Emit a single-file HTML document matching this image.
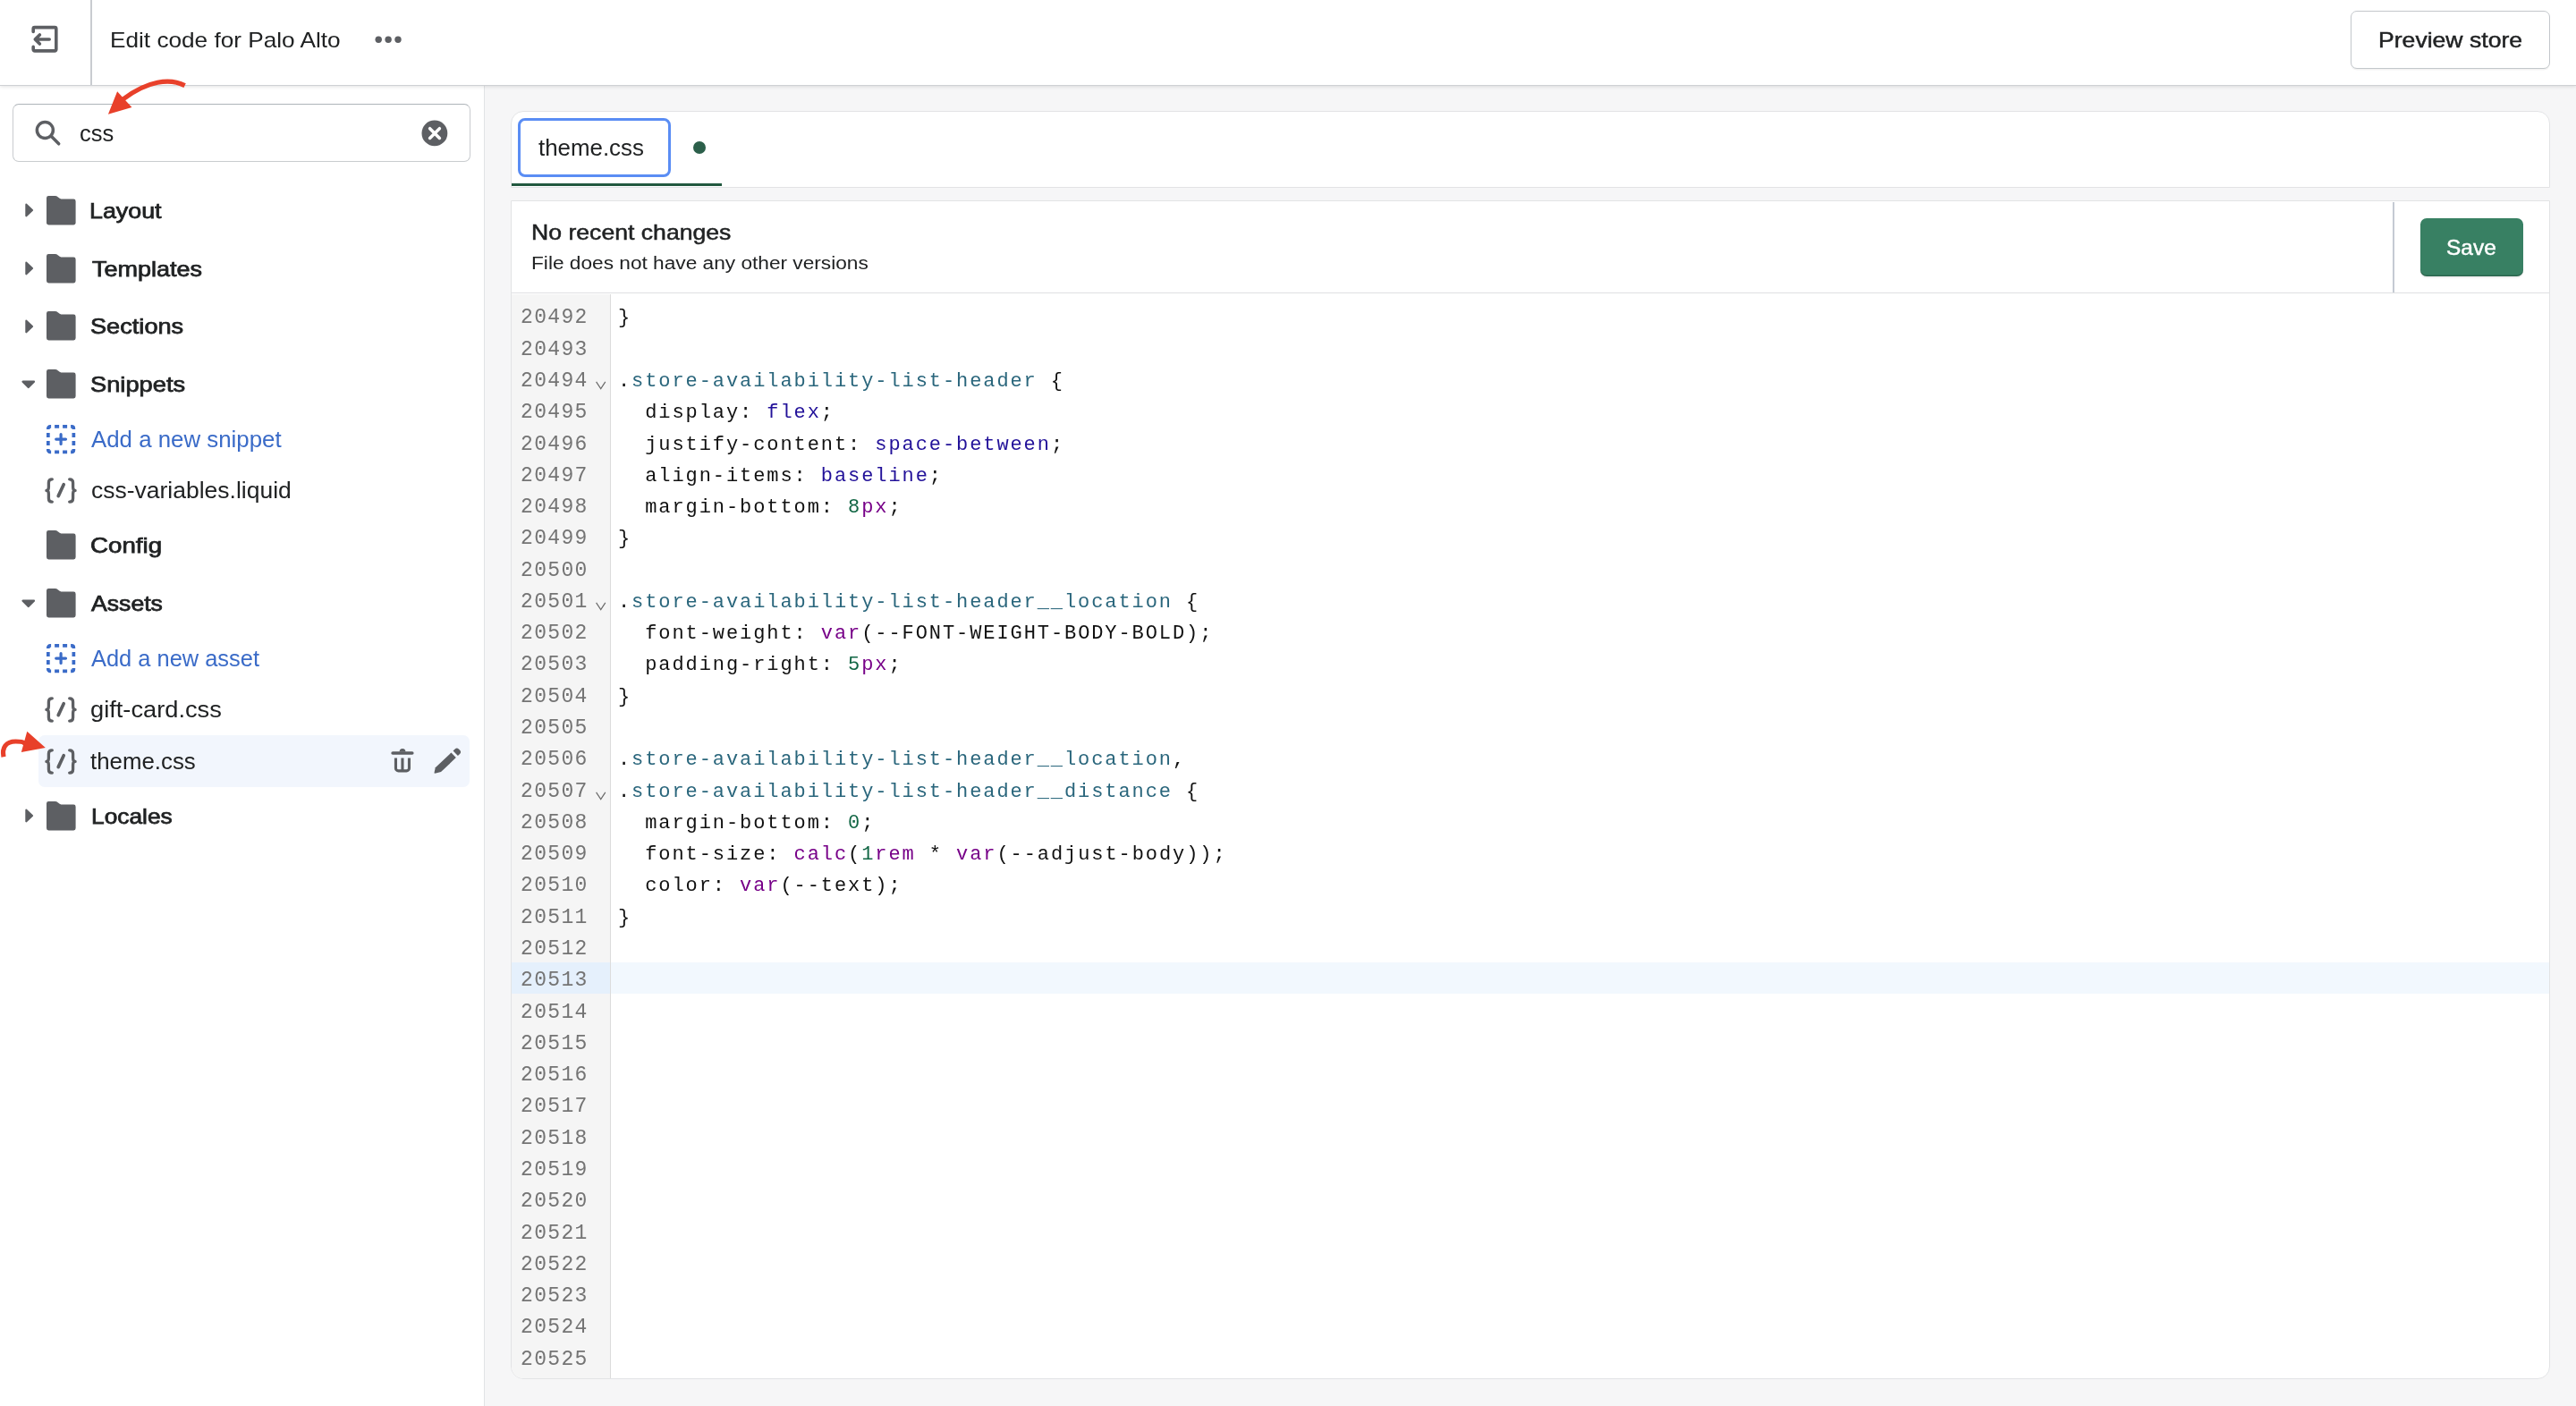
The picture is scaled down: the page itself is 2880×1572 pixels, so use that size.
<!DOCTYPE html>
<html lang="en"><head><meta charset="utf-8"><title>Edit code for Palo Alto</title>
<style>
*{box-sizing:border-box;margin:0;padding:0}
html,body{width:2880px;height:1572px;overflow:hidden;background:#f6f6f7}
body{position:relative;font-family:"Liberation Sans",Arial,sans-serif;color:#202223}
.t{position:absolute;white-space:pre;display:block;transform-origin:0 0}
.abs{position:absolute}
svg{position:absolute;overflow:visible}
#topbar{position:absolute;left:0;top:0;width:2880px;height:96px;background:#fff;border-bottom:1px solid #cfd1d4;box-shadow:0 1px 4px rgba(0,0,0,.12);z-index:5}
#sidebar{position:absolute;left:0;top:95px;width:542px;height:1477px;background:#fff;border-right:1px solid #e1e3e5}
.card{position:absolute;background:#fff;border:1px solid #e2e3e5}
.semi{-webkit-text-stroke:0.75px currentColor}
.med{-webkit-text-stroke:0.45px currentColor}
.semi2{-webkit-text-stroke:0.5px currentColor}
#code{position:absolute;left:690.96px;top:338.4px;font-family:"Liberation Mono","DejaVu Sans Mono",monospace;font-size:22px;letter-spacing:1.92px;color:#111;white-space:pre}
#code div,#nums div{height:35.295px;line-height:35.295px}
#nums{position:absolute;left:582.1px;top:338.4px;font-family:"Liberation Mono","DejaVu Sans Mono",monospace;font-size:23px;letter-spacing:1.32px;color:#747474;white-space:pre}
.q{color:#2a667c}.a{color:#221199}.n{color:#116644}.k{color:#770088}
#w{position:absolute;left:0;top:0;width:2880px;height:1572px;will-change:transform}
</style></head><body><div id="w">

<header id="topbar">
<svg style="left:0;top:0" width="110" height="95" viewBox="0 0 110 95" fill="none" stroke="#5d5f63" stroke-width="3.6" stroke-linecap="round" stroke-linejoin="round">
<path d="M37.2 35.4V32.2a1.6 1.6 0 0 1 1.6-1.6H61.2a1.6 1.6 0 0 1 1.6 1.6V55.3a1.6 1.6 0 0 1-1.6 1.6H38.8a1.6 1.6 0 0 1-1.6-1.6V52.4"/>
<path d="M55.2 44H39.6M44.4 38.9 39.3 44 44.4 49.1"/>
</svg>
<div class="abs" style="left:101px;top:0;width:2px;height:95px;background:#c9ccd0"></div>
<span class="t" style="left:122.81px;top:33px;font-size:23.8px;line-height:23.8px;color:#202223;transform:scaleX(1.1001)">Edit code for Palo Alto</span>
<svg style="left:410px;top:30px" width="50" height="30"><g fill="#5d5f63"><circle cx="13.2" cy="14.25" r="3.7"/><circle cx="24.1" cy="14.25" r="3.7"/><circle cx="35" cy="14.25" r="3.7"/></g></svg>
<div class="abs" style="left:2628px;top:12px;width:223px;height:64.5px;border:1.5px solid #c3c7cb;border-radius:7px;background:#fff;box-shadow:0 1.5px 0 rgba(0,0,0,.05)"></div>
<span class="t med" style="left:2658.65px;top:33px;font-size:23.8px;line-height:23.8px;color:#202223;transform:scaleX(1.1173)">Preview store</span>
</header>
<div id="sidebar"></div>
<nav aria-label="Theme files">
<div class="abs" style="left:14px;top:116px;width:512px;height:64.7px;border:1.5px solid #c9cccf;border-top-color:#aeb4b9;border-radius:7px;background:#fff"></div>
<svg style="left:30px;top:125px" width="50" height="50" fill="none" stroke="#5d5f63" stroke-width="3.5" stroke-linecap="round"><circle cx="20.35" cy="20.5" r="9"/><path d="M27 27.1 35.7 35.8"/></svg>
<span class="t" style="left:88.86px;top:137px;font-size:25px;line-height:25px;color:#202223;transform:scaleX(1.0198)">css</span>
<svg style="left:466px;top:129px" width="40" height="40"><circle cx="19.9" cy="19.9" r="14.4" fill="#5d5f63"/><path d="M14.6 14.7 25.4 25.5M25.4 14.7 14.6 25.5" stroke="#fff" stroke-width="3.5" stroke-linecap="round"/></svg>
<svg style="left:27px;top:226.00px" width="12" height="18"><path d="M2.4 2.7 9 9 2.4 15.3Z" fill="#5d5f63" stroke="#5d5f63" stroke-width="2.2" stroke-linejoin="round"/></svg>
<svg style="left:51.7px;top:218.65px" width="33" height="33"><path d="M2.3 0H10C12.6 0 14 3.6 17.6 3.6H30.3A2.3 2.3 0 0 1 32.6 5.9V30.1A2.3 2.3 0 0 1 30.3 32.4H2.3A2.3 2.3 0 0 1 0 30.1V2.3A2.3 2.3 0 0 1 2.3 0Z" fill="#5d5f63"/></svg>
<span class="t semi" style="left:100.37px;top:224px;font-size:23.8px;line-height:23.8px;color:#202223;transform:scaleX(1.1271)">Layout</span>
<svg style="left:27px;top:291.00px" width="12" height="18"><path d="M2.4 2.7 9 9 2.4 15.3Z" fill="#5d5f63" stroke="#5d5f63" stroke-width="2.2" stroke-linejoin="round"/></svg>
<svg style="left:51.7px;top:283.65px" width="33" height="33"><path d="M2.3 0H10C12.6 0 14 3.6 17.6 3.6H30.3A2.3 2.3 0 0 1 32.6 5.9V30.1A2.3 2.3 0 0 1 30.3 32.4H2.3A2.3 2.3 0 0 1 0 30.1V2.3A2.3 2.3 0 0 1 2.3 0Z" fill="#5d5f63"/></svg>
<span class="t semi" style="left:102.55px;top:289px;font-size:23.8px;line-height:23.8px;color:#202223;transform:scaleX(1.1352)">Templates</span>
<svg style="left:27px;top:355.75px" width="12" height="18"><path d="M2.4 2.7 9 9 2.4 15.3Z" fill="#5d5f63" stroke="#5d5f63" stroke-width="2.2" stroke-linejoin="round"/></svg>
<svg style="left:51.7px;top:348.40px" width="33" height="33"><path d="M2.3 0H10C12.6 0 14 3.6 17.6 3.6H30.3A2.3 2.3 0 0 1 32.6 5.9V30.1A2.3 2.3 0 0 1 30.3 32.4H2.3A2.3 2.3 0 0 1 0 30.1V2.3A2.3 2.3 0 0 1 2.3 0Z" fill="#5d5f63"/></svg>
<span class="t semi" style="left:101.37px;top:353px;font-size:23.8px;line-height:23.8px;color:#202223;transform:scaleX(1.1415)">Sections</span>
<svg style="left:23px;top:423.50px" width="18" height="12"><path d="M2.5 2.7H15L8.75 9Z" fill="#5d5f63" stroke="#5d5f63" stroke-width="2.2" stroke-linejoin="round"/></svg>
<svg style="left:51.7px;top:413.15px" width="33" height="33"><path d="M2.3 0H10C12.6 0 14 3.6 17.6 3.6H30.3A2.3 2.3 0 0 1 32.6 5.9V30.1A2.3 2.3 0 0 1 30.3 32.4H2.3A2.3 2.3 0 0 1 0 30.1V2.3A2.3 2.3 0 0 1 2.3 0Z" fill="#5d5f63"/></svg>
<span class="t semi" style="left:101.37px;top:418px;font-size:23.8px;line-height:23.8px;color:#202223;transform:scaleX(1.1455)">Snippets</span>
<svg style="left:51.7px;top:592.90px" width="33" height="33"><path d="M2.3 0H10C12.6 0 14 3.6 17.6 3.6H30.3A2.3 2.3 0 0 1 32.6 5.9V30.1A2.3 2.3 0 0 1 30.3 32.4H2.3A2.3 2.3 0 0 1 0 30.1V2.3A2.3 2.3 0 0 1 2.3 0Z" fill="#5d5f63"/></svg>
<span class="t semi" style="left:101.37px;top:598px;font-size:23.8px;line-height:23.8px;color:#202223;transform:scaleX(1.1637)">Config</span>
<svg style="left:23px;top:668.50px" width="18" height="12"><path d="M2.5 2.7H15L8.75 9Z" fill="#5d5f63" stroke="#5d5f63" stroke-width="2.2" stroke-linejoin="round"/></svg>
<svg style="left:51.7px;top:658.15px" width="33" height="33"><path d="M2.3 0H10C12.6 0 14 3.6 17.6 3.6H30.3A2.3 2.3 0 0 1 32.6 5.9V30.1A2.3 2.3 0 0 1 30.3 32.4H2.3A2.3 2.3 0 0 1 0 30.1V2.3A2.3 2.3 0 0 1 2.3 0Z" fill="#5d5f63"/></svg>
<span class="t semi" style="left:101.84px;top:663px;font-size:23.8px;line-height:23.8px;color:#202223;transform:scaleX(1.1188)">Assets</span>
<svg style="left:27px;top:903.00px" width="12" height="18"><path d="M2.4 2.7 9 9 2.4 15.3Z" fill="#5d5f63" stroke="#5d5f63" stroke-width="2.2" stroke-linejoin="round"/></svg>
<svg style="left:51.7px;top:895.65px" width="33" height="33"><path d="M2.3 0H10C12.6 0 14 3.6 17.6 3.6H30.3A2.3 2.3 0 0 1 32.6 5.9V30.1A2.3 2.3 0 0 1 30.3 32.4H2.3A2.3 2.3 0 0 1 0 30.1V2.3A2.3 2.3 0 0 1 2.3 0Z" fill="#5d5f63"/></svg>
<span class="t semi" style="left:101.58px;top:901px;font-size:23.8px;line-height:23.8px;color:#202223;transform:scaleX(1.1058)">Locales</span>
<svg style="left:51.9px;top:475.00px" width="33" height="33" fill="none" stroke="#3a6bc8" stroke-width="3.7"><path d="M1.85 5.1V4.05a2.2 2.2 0 0 1 2.2-2.2H5.1"/><path d="M27.1 1.85h1.05a2.2 2.2 0 0 1 2.2 2.2V5.1"/><path d="M30.35 27.1v1.05a2.2 2.2 0 0 1-2.2 2.2H27.1"/><path d="M5.1 30.35H4.05a2.2 2.2 0 0 1-2.2-2.2V27.1"/><path d="M9.1 1.85h5M18.1 1.85h5M9.1 30.35h5M18.1 30.35h5M1.85 9.1v5M1.85 18.1v5M30.35 9.1v5M30.35 18.1v5"/><path d="M10.7 16.1h10.8M16.1 10.7v10.8" stroke-width="3.2" stroke-linecap="round"/></svg>
<span class="t" style="left:101.98px;top:479px;font-size:25px;line-height:25px;color:#3a6bc8;transform:scaleX(1.0336)">Add a new snippet</span>
<svg style="left:50px;top:533.75px" width="36" height="29" fill="none" stroke="#5d5f63" stroke-width="3.3" stroke-linecap="round" stroke-linejoin="round"><path d="M8.3 1.8Q4.4 1.8 4.4 5.7V10.6Q4.4 14.45 1.9 14.45Q4.4 14.45 4.4 18.3V23.2Q4.4 27.1 8.3 27.1"/><path d="M27.7 1.8Q31.6 1.8 31.6 5.7V10.6Q31.6 14.45 34.1 14.45Q31.6 14.45 31.6 18.3V23.2Q31.6 27.1 27.7 27.1"/><path d="M15.2 20.6 21.2 7.7" stroke-width="3.7"/></svg>
<span class="t" style="left:101.54px;top:536px;font-size:25px;line-height:25px;color:#202223;transform:scaleX(1.0595)">css-variables.liquid</span>
<svg style="left:51.9px;top:719.75px" width="33" height="33" fill="none" stroke="#3a6bc8" stroke-width="3.7"><path d="M1.85 5.1V4.05a2.2 2.2 0 0 1 2.2-2.2H5.1"/><path d="M27.1 1.85h1.05a2.2 2.2 0 0 1 2.2 2.2V5.1"/><path d="M30.35 27.1v1.05a2.2 2.2 0 0 1-2.2 2.2H27.1"/><path d="M5.1 30.35H4.05a2.2 2.2 0 0 1-2.2-2.2V27.1"/><path d="M9.1 1.85h5M18.1 1.85h5M9.1 30.35h5M18.1 30.35h5M1.85 9.1v5M1.85 18.1v5M30.35 9.1v5M30.35 18.1v5"/><path d="M10.7 16.1h10.8M16.1 10.7v10.8" stroke-width="3.2" stroke-linecap="round"/></svg>
<span class="t" style="left:101.99px;top:724px;font-size:25px;line-height:25px;color:#3a6bc8;transform:scaleX(1.0170)">Add a new asset</span>
<svg style="left:50px;top:779.15px" width="36" height="29" fill="none" stroke="#5d5f63" stroke-width="3.3" stroke-linecap="round" stroke-linejoin="round"><path d="M8.3 1.8Q4.4 1.8 4.4 5.7V10.6Q4.4 14.45 1.9 14.45Q4.4 14.45 4.4 18.3V23.2Q4.4 27.1 8.3 27.1"/><path d="M27.7 1.8Q31.6 1.8 31.6 5.7V10.6Q31.6 14.45 34.1 14.45Q31.6 14.45 31.6 18.3V23.2Q31.6 27.1 27.7 27.1"/><path d="M15.2 20.6 21.2 7.7" stroke-width="3.7"/></svg>
<span class="t" style="left:101.12px;top:781px;font-size:25px;line-height:25px;color:#202223;transform:scaleX(1.0895)">gift-card.css</span>
<div class="abs" style="left:43px;top:822px;width:482px;height:58px;border-radius:7px;background:#f2f6fd"></div>
<svg style="left:50px;top:836.65px" width="36" height="29" fill="none" stroke="#5d5f63" stroke-width="3.3" stroke-linecap="round" stroke-linejoin="round"><path d="M8.3 1.8Q4.4 1.8 4.4 5.7V10.6Q4.4 14.45 1.9 14.45Q4.4 14.45 4.4 18.3V23.2Q4.4 27.1 8.3 27.1"/><path d="M27.7 1.8Q31.6 1.8 31.6 5.7V10.6Q31.6 14.45 34.1 14.45Q31.6 14.45 31.6 18.3V23.2Q31.6 27.1 27.7 27.1"/><path d="M15.2 20.6 21.2 7.7" stroke-width="3.7"/></svg>
<span class="t" style="left:101.38px;top:839px;font-size:25px;line-height:25px;color:#202223;transform:scaleX(1.0333)">theme.css</span>
<svg style="left:430px;top:830px" width="40" height="40"><g fill="#5d5f63"><rect x="7.3" y="10.2" width="25.3" height="3.6" rx="1.8"/><path d="M16.6 10.6a3.4 3.6 0 0 1 6.8 0Z"/></g>
<path d="M12.45 17.6V28.9a3 3 0 0 0 3 3H24.45a3 3 0 0 0 3-3V17.6M19.95 17.6V31" fill="none" stroke="#5d5f63" stroke-width="3.1"/></svg>
<svg style="left:480px;top:830px" width="40" height="40"><g fill="#5d5f63" transform="translate(5.7 34.7) rotate(-43.6)"><path d="M0 0 .8-1 5.2-3.9H29.6V3.9H6.4L1.2 .9Z"/><path d="M32.5-3.9H35.4a3 3 0 0 1 3 3V.9a3 3 0 0 1-3 3H32.5Z"/></g></svg>
</nav>
<main>
<div class="card" style="left:571px;top:124px;width:2280px;height:86px;border-radius:14px 14px 0 0"></div>
<div class="abs" style="left:579px;top:132px;width:171px;height:66px;border:3.5px solid #5a8df4;border-radius:8px;background:#fff"></div>
<span class="t" style="left:602.21px;top:153px;font-size:25px;line-height:25px;color:#202223;transform:scaleX(1.0349)">theme.css</span>
<div class="abs" style="left:775px;top:158px;width:14.2px;height:14.2px;border-radius:50%;background:#2b5f4a"></div>
<div class="abs" style="left:572px;top:205px;width:235px;height:3.2px;background:#22583f"></div>
<div class="card" style="left:571px;top:224px;width:2280px;height:1318px;border-radius:0 0 14px 14px;overflow:hidden">
</div>
<span class="t semi2" style="left:594.37px;top:248px;font-size:23.8px;line-height:23.8px;color:#202223;transform:scaleX(1.1183)">No recent changes</span>
<span class="t" style="left:594.46px;top:284px;font-size:20px;line-height:20px;color:#202223;transform:scaleX(1.1335)">File does not have any other versions</span>
<div class="abs" style="left:2675px;top:226px;width:2px;height:101px;background:#c5cad3"></div>
<div class="abs" style="left:2706px;top:244px;width:115px;height:65px;border-radius:7px;background:#388063;box-shadow:inset 0 -1.5px 0 rgba(0,0,0,.2),0 1.5px 1px rgba(0,0,0,.06)"></div>
<span class="t med" style="left:2735.29px;top:265px;font-size:23.8px;line-height:23.8px;color:#fff;transform:scaleX(1.0280)">Save</span>
<div class="abs" style="left:572px;top:327px;width:2278px;height:1px;background:#dfe0e2"></div>
<div class="abs" style="left:572px;top:329px;width:110px;height:1212px;background:#f5f5f5;border-radius:0 0 0 13px"></div>
<div class="abs" style="left:682px;top:329px;width:1px;height:1212px;background:#dcdcdc"></div>
<div class="abs" style="left:572px;top:1076.2px;width:110px;height:34.4px;background:#e5f0fc"></div>
<div class="abs" style="left:683px;top:1076.2px;width:2167px;height:34.4px;background:#f2f8fe"></div>
<div id="nums"><div>20492</div><div>20493</div><div>20494</div><div>20495</div><div>20496</div><div>20497</div><div>20498</div><div>20499</div><div>20500</div><div>20501</div><div>20502</div><div>20503</div><div>20504</div><div>20505</div><div>20506</div><div>20507</div><div>20508</div><div>20509</div><div>20510</div><div>20511</div><div>20512</div><div>20513</div><div>20514</div><div>20515</div><div>20516</div><div>20517</div><div>20518</div><div>20519</div><div>20520</div><div>20521</div><div>20522</div><div>20523</div><div>20524</div><div>20525</div></div>
<div id="code"><div>}</div><div> </div><div>.<span class="q">store-availability-list-header</span> {</div><div>  display: <span class="a">flex</span>;</div><div>  justify-content: <span class="a">space-between</span>;</div><div>  align-items: <span class="a">baseline</span>;</div><div>  margin-bottom: <span class="n">8</span><span class="k">px</span>;</div><div>}</div><div> </div><div>.<span class="q">store-availability-list-header__location</span> {</div><div>  font-weight: <span class="k">var</span>(--FONT-WEIGHT-BODY-BOLD);</div><div>  padding-right: <span class="n">5</span><span class="k">px</span>;</div><div>}</div><div> </div><div>.<span class="q">store-availability-list-header__location</span>,</div><div>.<span class="q">store-availability-list-header__distance</span> {</div><div>  margin-bottom: <span class="n">0</span>;</div><div>  font-size: <span class="k">calc</span>(<span class="n">1</span><span class="k">rem</span> * <span class="k">var</span>(--adjust-body));</div><div>  color: <span class="k">var</span>(--text);</div><div>}</div><div> </div><div> </div><div> </div><div> </div><div> </div><div> </div><div> </div><div> </div><div> </div><div> </div><div> </div><div> </div><div> </div><div> </div></div>
<svg style="left:666px;top:426.24px" width="12" height="10" fill="none" stroke="#6b6b6b" stroke-width="1.2"><path d="M0.6 0.9 5.7 8.6 10.8 0.9"/></svg>
<svg style="left:666px;top:673.30px" width="12" height="10" fill="none" stroke="#6b6b6b" stroke-width="1.2"><path d="M0.6 0.9 5.7 8.6 10.8 0.9"/></svg>
<svg style="left:666px;top:885.08px" width="12" height="10" fill="none" stroke="#6b6b6b" stroke-width="1.2"><path d="M0.6 0.9 5.7 8.6 10.8 0.9"/></svg>
</main>
<svg style="left:0;top:0;z-index:9" width="2880" height="1572">
<path d="M206.6 95.6C190 87 165 90 137.5 111" fill="none" stroke="#e8402a" stroke-width="5.2"/>
<path d="M131.1 102.2 147.4 119.9 120.9 127.8Z" fill="#e8402a"/>
<path d="M4 846.2C2 836 6.5 829 17.5 829S25 830.4 30 832.4" fill="none" stroke="#e8402a" stroke-width="5.2"/>
<path d="M30.3 817.7 50.8 835.9 23.8 841Z" fill="#e8402a"/>
</svg>
</div></body></html>
